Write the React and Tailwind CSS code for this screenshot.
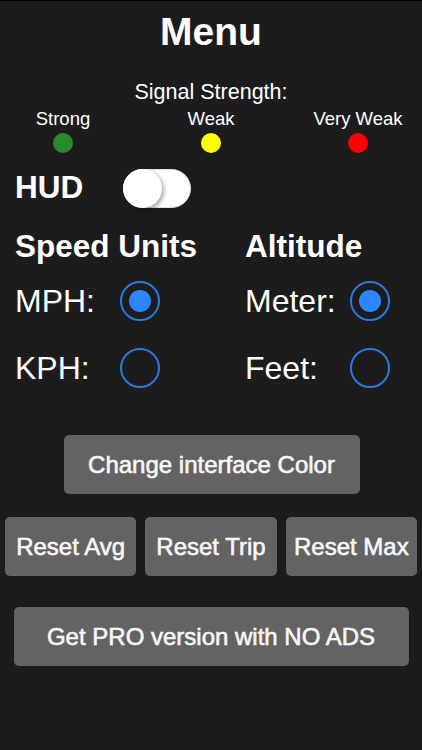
import React, { useState } from "react";

const Dot = ({ color }) => (
  <span className={`block w-5 h-5 rounded-full ${color}`}></span>
);

const Radio = ({ checked, onClick }) => (
  <button
    onClick={onClick}
    className="w-10 h-10 rounded-full border-2 border-[#2a78e0] flex items-center justify-center"
  >
    {checked && <span className="block w-[22px] h-[22px] rounded-full bg-[#2e86ff]"></span>}
  </button>
);

const Button = ({ children, className }) => (
  <button
    className={`h-[59px] rounded-[5px] bg-[#636363] text-[#f7f7f7] text-[24px] font-normal [-webkit-text-stroke:0.6px_#f7f7f7] ${className}`}
  >
    {children}
  </button>
);

export default function App() {
  const [hud, setHud] = useState(false);
  const [speed, setSpeed] = useState("mph");
  const [alt, setAlt] = useState("meter");

  return (
    <div
      className="w-[422px] h-[750px] bg-[#1c1c1c] border-t border-black text-white overflow-hidden"
      style={{ fontFamily: '"Liberation Sans", Arial, sans-serif' }}
    >
      <h1 className="mt-[11px] text-center text-[39px] leading-[39px] font-bold">Menu</h1>

      <p className="mt-[29px] text-center text-[21.5px] leading-[24px]">Signal Strength:</p>

      {/* signal legend */}
      <div className="mt-[4px] flex justify-center text-[18.5px] leading-[22px]">
        <div className="w-[147px] shrink-0 flex flex-col items-center gap-[3px] pr-[2px]">
          <span>Strong</span>
          <Dot color="bg-[#2a8a2a]" />
        </div>
        <div className="w-[147px] shrink-0 flex flex-col items-center gap-[3px]">
          <span>Weak</span>
          <Dot color="bg-[#ffff00]" />
        </div>
        <div className="w-[147px] shrink-0 flex flex-col items-center gap-[3px]">
          <span>Very Weak</span>
          <Dot color="bg-[#ff0000]" />
        </div>
      </div>

      {/* HUD */}
      <div className="mt-[15px] flex items-center h-10 pl-[15px]">
        <span className="w-[108px] text-[31.5px] font-bold leading-none">HUD</span>
        <button
          onClick={() => setHud(!hud)}
          className={`relative w-[68px] h-[39px] rounded-full border border-[#e3e3e3] ${hud ? "bg-[#4cd964]" : "bg-white"}`}
        >
          <span
            className={`absolute top-[-1px] w-[39px] h-[39px] rounded-full bg-white shadow-[2px_2px_4px_rgba(0,0,0,0.35)] ${hud ? "left-[28px]" : "left-[-1px]"}`}
          ></span>
        </button>
      </div>

      {/* units */}
      <div className="mt-[20px] grid grid-cols-[230px_1fr] pl-[15px]">
        <div>
          <h2 className="text-[31.5px] leading-[36px] font-bold">Speed Units</h2>
          <div className="mt-[17px] flex items-center h-10">
            <span className="w-[105px] text-[32px]">MPH:</span>
            <Radio checked={speed === "mph"} onClick={() => setSpeed("mph")} />
          </div>
          <div className="mt-[27px] flex items-center h-10">
            <span className="w-[105px] text-[32px]">KPH:</span>
            <Radio checked={speed === "kph"} onClick={() => setSpeed("kph")} />
          </div>
        </div>
        <div>
          <h2 className="text-[31.5px] leading-[36px] font-bold">Altitude</h2>
          <div className="mt-[17px] flex items-center h-10">
            <span className="w-[105px] text-[32px]">Meter:</span>
            <Radio checked={alt === "meter"} onClick={() => setAlt("meter")} />
          </div>
          <div className="mt-[27px] flex items-center h-10">
            <span className="w-[105px] text-[32px]">Feet:</span>
            <Radio checked={alt === "feet"} onClick={() => setAlt("feet")} />
          </div>
        </div>
      </div>

      {/* actions */}
      <div className="mt-[47px] flex justify-center pl-[1px]">
        <Button className="w-[296px]">Change interface Color</Button>
      </div>

      <div className="mt-[23px] grid grid-cols-3 gap-[9px] px-[5px]">
        <Button>Reset Avg</Button>
        <Button>Reset Trip</Button>
        <Button>Reset Max</Button>
      </div>

      <div className="mt-[31px] flex justify-center">
        <Button className="w-[395px]">Get PRO version with NO ADS</Button>
      </div>
    </div>
  );
}
